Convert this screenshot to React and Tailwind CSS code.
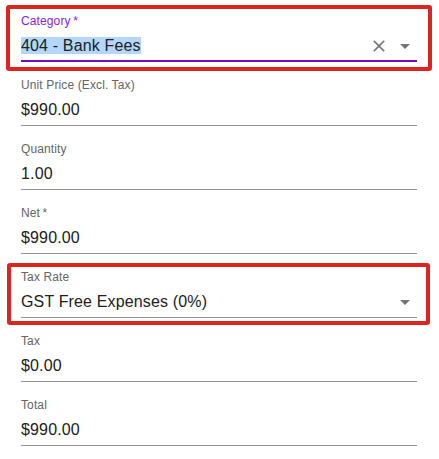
import React from "react";

const font = { fontFamily: '"Liberation Sans", Arial, sans-serif' };

function ClearIcon() {
  return (
    <svg viewBox="0 0 24 24" className="w-5 h-5 fill-[#757575]">
      <path d="M19 6.41 17.59 5 12 10.59 6.41 5 5 6.41 10.59 12 5 17.59 6.41 19 12 13.41 17.59 19 19 17.59 13.41 12z" />
    </svg>
  );
}

function ArrowDrop() {
  return (
    <svg viewBox="0 0 24 24" className="w-6 h-6 fill-[#757575]">
      <path d="M7 10l5 5 5-5z" />
    </svg>
  );
}

// standard MUI-ish text field: 16px label area + 32px input row
function Field({ label, value, required, focused, select, clearable, selected }) {
  return (
    <div className="h-12 flex flex-col">
      <div className="h-4">
        <span
          className={`block text-xs leading-[14px] tracking-[0.12px] ${
            focused ? "text-[#8a24e0]" : "text-[#666666]"
          }`}
        >
          {label}
          {required && <span>{"\u2009*"}</span>}
        </span>
      </div>
      <div
        className={`relative h-8 pt-1 ${
          focused ? "border-b-2 border-[#7309c6]" : "border-b border-[#949494]"
        }`}
      >
        <div className="text-base leading-[23px] tracking-[0.15px] text-[#212121]">
          {selected ? <span className="bg-[#b3d7ff]">{value}</span> : value}
        </div>
        {select && (
          <div className="absolute right-0 top-[16px] -translate-y-1/2 flex items-center gap-1">
            {clearable && <ClearIcon />}
            <ArrowDrop />
          </div>
        )}
      </div>
    </div>
  );
}

export default function App() {
  return (
    <div className="bg-white w-[439px] h-[459px]" style={font}>
      <div className="pl-[21px] pr-[22px] pt-[14px] flex flex-col gap-4">
        <div className="relative">
          <Field
            label="Category"
            required
            focused
            select
            clearable
            selected
            value="404 - Bank Fees"
          />
          <div className="absolute -left-[15px] -right-[15px] -top-[9px] -bottom-[9px] border-4 border-[#da2520] rounded-[3px]" />
        </div>
        <Field label="Unit Price (Excl. Tax)" value="$990.00" />
        <Field label="Quantity" value="1.00" />
        <Field label="Net" required value="$990.00" />
        <div className="relative">
          <Field label="Tax Rate" select value="GST Free Expenses (0%)" />
          <div className="absolute -left-[14px] -right-[13px] -top-[7px] -bottom-[7px] border-4 border-[#da2520] rounded-[3px]" />
        </div>
        <Field label="Tax" value="$0.00" />
        <Field label="Total" value="$990.00" />
      </div>
    </div>
  );
}
